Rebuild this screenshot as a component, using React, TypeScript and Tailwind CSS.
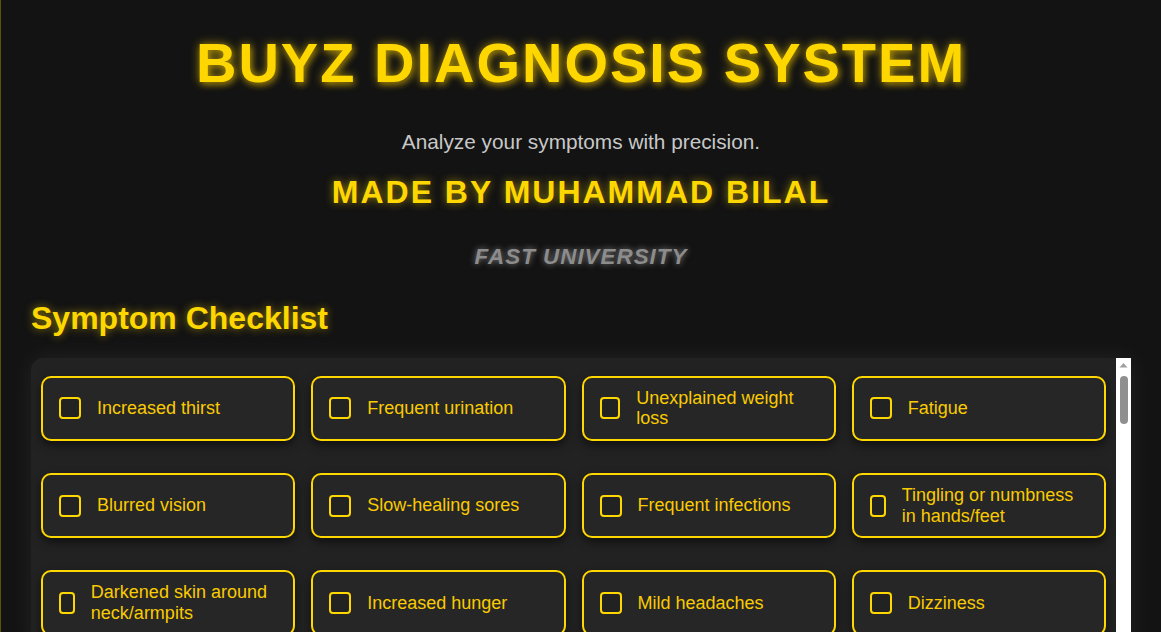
const symptoms = [
  "Increased thirst",
  "Frequent urination",
  "Unexplained weight loss",
  "Fatigue",
  "Blurred vision",
  "Slow-healing sores",
  "Frequent infections",
  "Tingling or numbness in hands/feet",
  "Darkened skin around neck/armpits",
  "Increased hunger",
  "Mild headaches",
  "Dizziness",
  "Chest pain",
  "Shortness of breath",
  "Nosebleeds",
  "Irregular heartbeat",
  "Fever",
  "Chills",
  "Cough",
  "Sore throat",
  "Runny nose",
  "Body aches",
  "Loss of taste or smell",
  "Nausea",
  "Vomiting",
  "Diarrhea",
  "Abdominal pain",
  "Bloating",
  "Constipation",
  "Loss of appetite",
  "Joint pain",
  "Muscle weakness",
  "Back pain",
  "Swelling in legs",
  "Skin rash",
  "Itching",
  "Dry skin",
  "Hair loss",
  "Pale skin",
  "Yellowing of skin/eyes",
  "Dark urine",
  "Night sweats",
  "Weight gain",
  "Cold intolerance",
  "Heat intolerance",
  "Anxiety",
  "Insomnia",
  "Memory problems",
  "Confusion",
  "Wheezing",
  "Sneezing",
  "Watery eyes",
  "Ear pain",
  "Sensitivity to light",
  "Stiff neck",
  "Painful urination",
  "Rapid heartbeat",
  "Fainting",
  "Swollen lymph nodes",
  "Easy bruising",
];

function SymptomCard({ label }: { label: string }) {
  return (
    <label className="flex items-center gap-4 min-h-[65px] px-4 py-[10px] rounded-[10px] border-2 border-[#FFD700] bg-[#262626] shadow-[0_4px_10px_rgba(0,0,0,0.55)] cursor-pointer">
      <span className="w-[22px] h-[22px] rounded-[4px] border-2 border-[#FFD700] bg-[#222]" />
      <span className="text-[18px] leading-[1.15] text-[#F9CB00]">{label}</span>
    </label>
  );
}

function Scrollbar() {
  return (
    <div className="w-[15px] shrink-0 bg-white flex flex-col items-center">
      <svg width="15" height="15" viewBox="0 0 15 15">
        <path d="M3.5 9.5 L7.5 5 L11.5 9.5 Z" fill="#a0a0a0" />
      </svg>
      <div className="mt-[3px] w-[8px] h-[48px] rounded-full bg-[#8f8f8f]" />
    </div>
  );
}

export default function App() {
  return (
    <div
      className="h-screen overflow-hidden border-l border-[#5c5400] bg-[#131313] leading-[1.15]"
      style={{ fontFamily: '"Liberation Sans", Arial, sans-serif' }}
    >
      <div className="w-[1100px] mx-auto pt-[31px] text-center">
        <h1 className="text-[56px] leading-[1.15] font-bold uppercase tracking-[2px] text-[#FFD700] [text-shadow:0_0_10px_rgba(255,215,0,0.6),2px_3px_6px_rgba(255,200,0,0.35)]">
          Buyz Diagnosis System
        </h1>
        <p className="mt-[35px] text-[20.8px] leading-[1.15] text-[#c8c8c8]">
          Analyze your symptoms with precision.
        </p>
        <h2 className="mt-[20px] text-[32px] leading-[1.15] font-bold uppercase tracking-[2px] text-[#FFD700] [text-shadow:0_0_8px_rgba(255,215,0,0.55)]">
          Made by Muhammad Bilal
        </h2>
        <h3 className="mt-[33px] text-[22.4px] leading-[1.15] font-bold italic uppercase tracking-[1px] text-[#8c8c8c] [text-shadow:0_0_6px_rgba(200,200,200,0.6)]">
          Fast University
        </h3>
      </div>

      <div className="w-[1100px] mx-auto mt-[30px]">
        <h2 className="text-[32px] leading-[1.15] font-bold text-[#FFD700] [text-shadow:0_0_8px_rgba(255,215,0,0.55)]">
          Symptom Checklist
        </h2>
        <div className="mt-[21px] h-[300px] flex rounded-l-xl overflow-hidden bg-[#222] shadow-[0_0_25px_rgba(255,255,255,0.07)]">
          <div className="flex-1 overflow-y-auto">
            <div className="grid grid-cols-4 gap-x-4 gap-y-8 px-[10px] pt-[18px] pb-[19px]">
              {symptoms.map((s) => (
                <SymptomCard key={s} label={s} />
              ))}
            </div>
          </div>
          <Scrollbar />
        </div>
      </div>
    </div>
  );
}
